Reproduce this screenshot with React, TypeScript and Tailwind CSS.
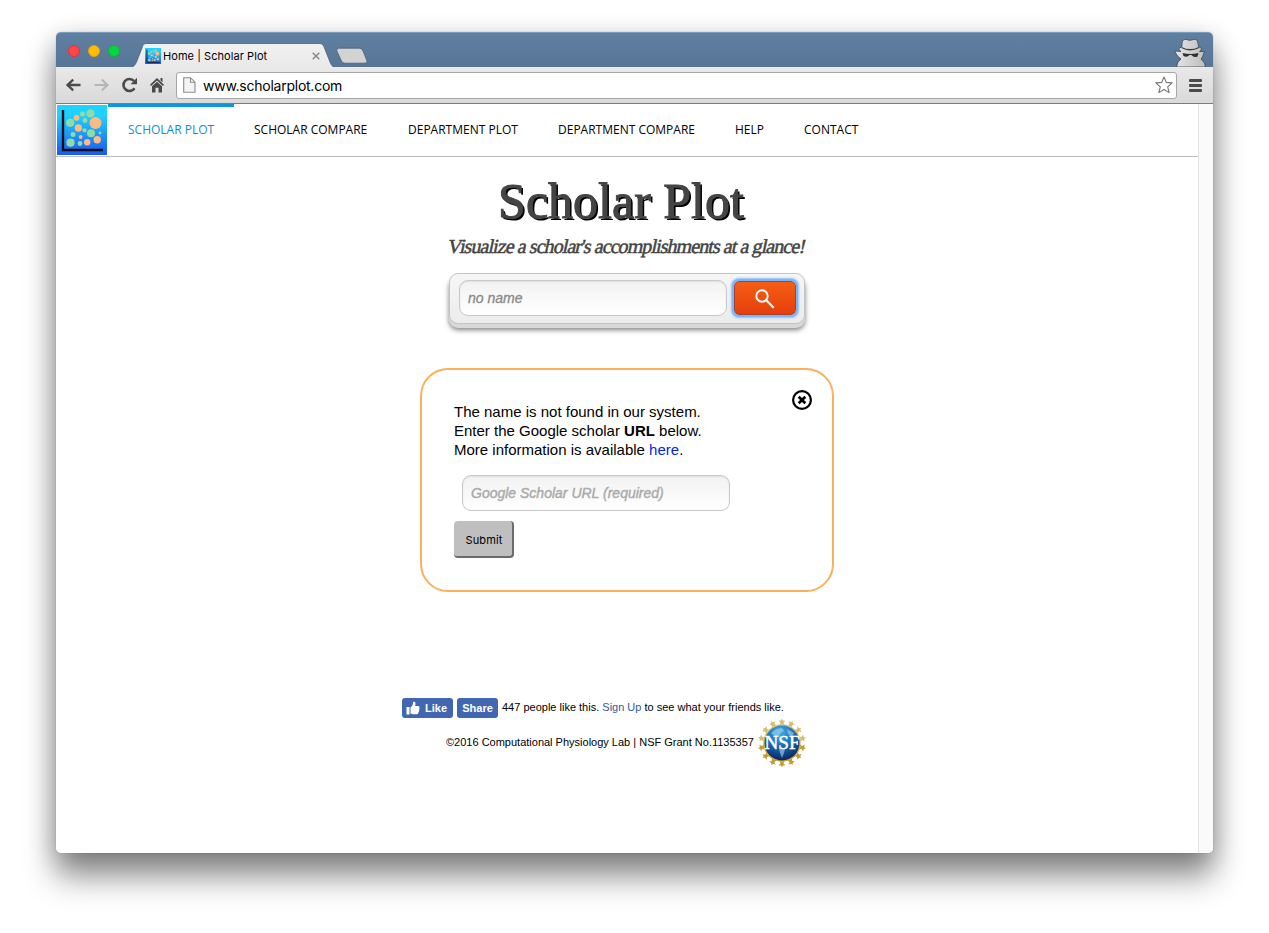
import React from "react";

const tabs = [
  { label: "SCHOLAR COMPARE", width: "w-[154px]" },
  { label: "DEPARTMENT PLOT", width: "w-[150px]" },
  { label: "DEPARTMENT COMPARE", width: "w-[177px]" },
  { label: "HELP", width: "w-[69px]" },
  { label: "CONTACT", width: "w-[94px]" },
];

const bubbles: [number, number, number, string][] = [
  [19.5, 12.8, 2.9, "#ffb983"], [25.5, 9, 2.5, "#90dba8"], [33.5, 8.5, 4, "#90dba8"],
  [28, 15.5, 2.4, "#90dba8"], [13.2, 17.8, 4.1, "#90dba8"], [38.5, 18, 6, "#ffb983"],
  [21.3, 23, 3.7, "#ffb983"], [16, 29.5, 2.5, "#90dba8"], [27.5, 25.3, 2.1, "#90dba8"],
  [34, 28.3, 4, "#90dba8"], [43, 28, 1.4, "#90dba8"], [23.7, 32, 1.9, "#ffb983"],
  [13.5, 37.7, 4.1, "#90dba8"], [23, 38.5, 2.4, "#90dba8"], [30.2, 37.3, 3.2, "#ffb983"],
  [40.2, 34.8, 3.7, "#ffb983"],
];

function PlotLogo({ className, id }: { className: string; id: string }) {
  return (
    <svg className={className} viewBox="0 0 50 50">
      <defs>
        <linearGradient id={id} x1="0" y1="0" x2="0" y2="1">
          <stop offset="0.2" stopColor="#1fd2ff" />
          <stop offset="1" stopColor="#1b58ee" />
        </linearGradient>
      </defs>
      <rect width="50" height="50" fill={`url(#${id})`} />
      {bubbles.map(([x, y, r, c], i) => (
        <circle key={i} cx={x} cy={y} r={r} fill={c} />
      ))}
      <path d="M6 5V45H46" fill="none" stroke="#0a0d1c" strokeWidth="2.4" />
    </svg>
  );
}

function NsfSeal() {
  const n = 14;
  return (
    <svg className="h-[50px] w-[50px] shrink-0" viewBox="-25 -25 50 50">
      <defs>
        <radialGradient id="globe" cx="0.45" cy="0.2" r="0.85">
          <stop offset="0" stopColor="#43aee0" />
          <stop offset="0.45" stopColor="#1a70ba" />
          <stop offset="1" stopColor="#071d55" />
        </radialGradient>
        <linearGradient id="gold" gradientUnits="userSpaceOnUse" x1="0" y1="-24" x2="0" y2="24">
          <stop offset="0" stopColor="#dfc57c" />
          <stop offset="1" stopColor="#c29a2c" />
        </linearGradient>
      </defs>
      <circle r="18.7" fill="url(#gold)" />
      {Array.from({ length: n }, (_, i) => {
        const a = (i * 2 * Math.PI) / n;
        const x = 21.4 * Math.sin(a);
        const y = -21.4 * Math.cos(a);
        return (
          <path
            key={i}
            transform={`translate(${x} ${y}) rotate(${(i * 360) / n})`}
            d="M0 -3.2L.9 -1.200L3.600 -.9L1.500 .8L2.400 3.600L0 2.500L-2.400 3.600L-1.500 .8L-3.600 -.9L-.9 -1.200Z"
            fill={y < 4 ? "#d9bd6c" : "#c39b2f"}
          />
        );
      })}
      <circle r="17.4" fill="url(#globe)" />
      <path d="M-11 -10L-6 -14L0 -15L2 -12L-2 -10L-3 -6L-7 -7ZM-3 5L3 6L2 10L0 15L-2 10ZM5 -14L12 -10L10 -6L6 -9Z" fill="#a5d6ee" opacity=".6" />
      <text y="6" textAnchor="middle" textLength="35" lengthAdjust="spacingAndGlyphs" fontFamily="Liberation Serif, serif" fontSize="19" fill="#fff" stroke="#fff" strokeWidth=".5">
        NSF
      </text>
    </svg>
  );
}

function Incognito() {
  return (
    <svg className="h-[29px] w-[34px]" viewBox="0 0 34 29">
      <defs>
        <linearGradient id="spy" x1="0" y1="0" x2="1" y2="0">
          <stop offset="0" stopColor="#e6e6e6" />
          <stop offset="1" stopColor="#bdbdbd" />
        </linearGradient>
      </defs>
      <path d="M9 8.500C9 4 9.500 2 11.500 1.500C14 1 15 2.300 17 2.300S20.500 .8 23 1.500C24.500 2 25 5 25.500 8.500L28.500 10.500Q29 12 26.500 13.500L31.500 13.500L29.500 19L28 21L31.500 25L32.500 29H3.500L5 24L8 21L4.500 18L1.500 13L8 13.500Q5 12 6 10.500Z" fill="url(#spy)" stroke="#3e4650" strokeWidth=".8" />
      <path d="M8.500 9.500Q17 14 26 9.500" fill="none" stroke="#3b3d40" strokeWidth="1.300" />
      <path d="M9.500 15Q17 17 25.500 15L24.500 18.500Q20.500 20 18.500 17H16.500Q14 20 10.500 18Z" fill="#2f3032" />
    </svg>
  );
}

function TitleBar() {
  return (
    <div className="flex h-[35px] rounded-t-[5px] border-t border-[#7a9bbb] bg-linear-to-b from-[#6080a2] to-[#567597]">
      <div className="flex gap-2 pt-3 pl-3">
        <i className="size-3 rounded-full border border-[#e0333a] bg-[#ff4645]" />
        <i className="size-3 rounded-full border border-[#e5a30a] bg-[#ffbd05]" />
        <i className="size-3 rounded-full border border-[#12b62f] bg-[#00d742]" />
      </div>
      <div className="relative ml-2.5 h-[34px] w-[206px]">
        <svg className="absolute inset-0 h-[34px] w-[206px]" viewBox="0 0 206 34">
          <defs>
            <linearGradient id="tab" x1="0" y1="0" x2="0" y2="1">
              <stop offset="0" stopColor="#f1f1f1" />
              <stop offset="1" stopColor="#e9e9e9" />
            </linearGradient>
          </defs>
          <path d="M0 34.500C4 34 5 32 6.500 29L12 15C13 11.500 14 10.500 17 10.500H189C192 10.500 193 11.500 194.500 15L200 29C201.500 32 202 34 206 34.500Z" fill="url(#tab)" stroke="#465f7b" strokeWidth=".8" />
        </svg>
        <div className="relative flex h-[34px] items-center pt-3 pl-[15px]">
          <PlotLogo id="fav" className="size-4 shrink-0" />
          <span className="ml-0.5 w-[149px] font-['Inter'] text-[11px] tracking-[0.06px] whitespace-nowrap text-black">Home | Scholar Plot</span>
          <svg className="size-[8px]" viewBox="0 0 8 8">
            <path d="M.7 .7L7.300 7.300M7.300 .7L.7 7.300" stroke="#858585" strokeWidth="1.400" />
          </svg>
        </div>
      </div>
      <svg className="mt-[14px] h-[18px] w-[32px]" viewBox="0 0 32 18">
        <path d="M2.500 1.200H23.500Q26 1.200 27 4L31 14Q31.500 16.200 28.500 16.200H9Q6.500 16.200 5.500 14L.8 4Q.3 1.200 2.500 1.200Z" fill="#d3d3d4" stroke="#465f7b" strokeWidth=".8" />
      </svg>
      <div className="ml-auto flex items-end pr-[6px]">
        <Incognito />
      </div>
    </div>
  );
}

function Toolbar() {
  return (
    <div className="flex h-[37px] items-center border-b border-[#7c7c7c] bg-linear-to-b from-[#e9e9e9] to-[#d9d9d9] pl-[9px]">
      <svg className="h-4 w-[17px]" viewBox="0 0 17 16">
        <path d="M15.500 8H2.500M8.200 2.600L2.500 8L8.200 13.400" fill="none" stroke="#4a4a4a" strokeWidth="2.300" />
      </svg>
      <svg className="ml-[11px] h-4 w-[17px]" viewBox="0 0 17 16">
        <path d="M1.500 8H14.500M8.800 2.600L14.500 8L8.800 13.400" fill="none" stroke="#b5b5b5" strokeWidth="2" />
      </svg>
      <svg className="ml-[11px] h-4 w-[17px]" viewBox="0 0 17 16">
        <path d="M13.500 11.200A6 6 0 1 1 13 4" fill="none" stroke="#4a4a4a" strokeWidth="2.600" />
        <path d="M16 .8V7.200H9.500Z" fill="#4a4a4a" />
      </svg>
      <svg className="ml-[11px] h-4 w-4" viewBox="0 0 16 16">
        <path d="M8 1L15 7.800L13.900 9L8 3.500L2.100 9L1 7.800ZM11.500 1H13.500V5.300L11.500 3.500ZM3 9.300L8 4.700L13 9.300V15.500H9.500V10.800H6.500V15.500H3Z" fill="#4a4a4a" />
      </svg>
      <div className="ml-[11px] flex h-[27px] w-[1001px] items-center rounded-[3px] border border-[#a6a6a6] bg-white pl-[6px]">
        <svg className="h-4 w-[13px]" viewBox="0 0 13 16">
          <path d="M.7 .7H7.500L12 5.200V15.300H.7Z M7.500 .7V5.200H12" fill="#f4f4f4" stroke="#8c8c8c" strokeWidth="1.100" />
        </svg>
        <span className="ml-[7px] font-['Inter'] text-[14px] tracking-[-0.25px] text-black">www.scholarplot.com</span>
        <svg className="mr-[3px] ml-auto h-[18px] w-[18px]" viewBox="0 0 18 18">
          <path d="M9 1L11.300 6.400L17.200 6.900L12.700 10.800L14.100 16.600L9 13.500L3.900 16.600L5.300 10.800L.8 6.900L6.700 6.400Z" fill="#fff" stroke="#757575" strokeWidth="1.100" strokeLinejoin="round" />
        </svg>
      </div>
      <div className="ml-3 flex w-[13px] flex-col gap-0.5">
        <i className="h-[3px] rounded-[1px] bg-[#4a4a4a]" />
        <i className="h-[3px] rounded-[1px] bg-[#4a4a4a]" />
        <i className="h-[3px] rounded-[1px] bg-[#4a4a4a]" />
      </div>
    </div>
  );
}

export default function App() {
  return (
    <div className="h-[933px] w-[1269px] overflow-hidden bg-white pt-8 pl-14 font-['Liberation_Sans',sans-serif]">
      <div className="h-[821px] w-[1157px] rounded-[5px] shadow-[0_0_1px_rgba(0,0,0,0.4),0_24px_32px_rgba(0,0,0,0.42),0_6px_26px_rgba(0,0,0,0.22)]">
        <TitleBar />
        <Toolbar />
        <div className="flex h-[749px] overflow-hidden rounded-b-[5px] bg-white">
          <main className="w-[1142px]">
            <nav className="flex h-[53px] border-b border-[#bdbdbd] pl-px font-['Open_Sans'] text-[12px] leading-[18px] whitespace-nowrap text-black">
              <PlotLogo id="logo" className="mt-px size-[50px] shrink-0" />
              <a className="ml-px w-[126px] border-t-3 border-[#0d97dc] pt-[14px] pl-5 text-[#0d8fd6]">SCHOLAR PLOT</a>
              {tabs.map((t) => (
                <a key={t.label} className={`${t.width} pt-[17px] pl-5`}>{t.label}</a>
              ))}
            </nav>

            <div className="flex flex-col items-center">
              <h1 className="mt-[15px] mr-[12px] h-[61px] font-['Liberation_Serif'] text-[50px] leading-[58px] whitespace-nowrap text-[#444] [-webkit-text-stroke:1px_#444] [text-shadow:2px_2px_0_#000]">Scholar Plot</h1>
              <p className="h-[27px] -skew-x-12 font-['Liberation_Serif'] text-[20px] leading-[26px] tracking-[-0.92px] whitespace-nowrap text-[#444] [-webkit-text-stroke:0.5px_#444]">Visualize a scholar's accomplishments at a glance!</p>

              <div className="mt-[13px] flex h-[51px] w-[356px] rounded-[9px] border border-[#c4c4c4] bg-linear-to-b from-[#f6f6f6] to-[#ececec] pt-[6px] pl-[9px] shadow-[0_4px_0_#d8d8d8,0_6px_5px_rgba(0,0,0,0.5)]">
                <div className="h-9 w-[268px] rounded-[9px] border border-[#c8c8c8] bg-linear-to-b from-[#f2f2f2] to-white pl-2 text-[14px] leading-[34px] text-[#888] italic shadow-[inset_0_1px_2px_rgba(0,0,0,0.08)] [-webkit-text-stroke:0.3px_#888]">no name</div>
                <div className="mt-px ml-[7px] flex h-[34px] w-[62px] items-center justify-center rounded-[5px] border border-[#a5432f] bg-linear-to-b from-[#f65e14] to-[#e63e0c] outline-2 outline-[#7ab5fa] shadow-[0_0_2px_3px_#8dc0fc]">
                  <svg className="mt-px size-5" viewBox="0 0 20 20">
                    <circle cx="7" cy="7" r="5.700" fill="none" stroke="#fff" strokeWidth="1.900" />
                    <path d="M11 11L18.700 18.700" stroke="#fff" strokeWidth="2.300" />
                  </svg>
                </div>
              </div>

              <section className="relative mt-[44px] h-[224px] w-[414px] rounded-[28px] border-2 border-[#fbb05c] pt-[32px] pl-8 text-black">
                <svg className="absolute top-5 right-5 size-5" viewBox="0 0 20 20">
                  <circle cx="10" cy="10" r="8.900" fill="none" stroke="#000" strokeWidth="2.200" />
                  <path d="M6.700 6.700L13.300 13.300M13.300 6.700L6.700 13.300" stroke="#000" strokeWidth="2.700" />
                </svg>
                <p className="h-[73px] text-[15px] leading-[19px] whitespace-nowrap">
                  The name is not found in our system.<br />
                  Enter the Google scholar <b>URL</b> below.<br />
                  More information is available <a className="text-[#0a1fe0]">here</a>.
                </p>
                <div className="ml-2 h-9 w-[268px] rounded-[9px] border border-[#c8c8c8] bg-linear-to-b from-[#f2f2f2] to-white pl-[8px] text-[14px] leading-[34px] text-[#aaa] italic shadow-[inset_0_1px_2px_rgba(0,0,0,0.08)] [-webkit-text-stroke:0.4px_#aaa]">Google Scholar URL (required)</div>
                <button className="mt-[10px] block h-[37px] w-[60px] rounded-[4px] border-r-2 border-b-2 border-[#6b6b6b] bg-[#bfbfbf] pt-[3px] pl-[2px] font-['Inter'] text-[11px] tracking-[0.1px]">Submit</button>
              </section>
            </div>

            <div className="mt-[106px] ml-[346px] flex h-5 items-center text-[11px] whitespace-nowrap text-black">
              <div className="flex h-5 w-[51px] items-center rounded-[3px] bg-[#4267b2] pl-1 font-bold text-white">
                <svg className="mr-[5px] size-[14px]" viewBox="0 0 14 14">
                  <path d="M.5 6H3.500V13.500H.5ZM4.500 6.500C6.500 5 7 3.500 7 1.500C7 .3 9.500 .2 9.500 2.500C9.500 3.800 9 5 9 5H12.500Q14 5.300 13.300 7Q14 8 13 9Q13.500 10.300 12.500 11Q12.700 13 11 13.300H7L4.500 12.500Z" fill="#fff" />
                </svg>
                Like
              </div>
              <div className="ml-1 flex h-5 w-[41px] items-center justify-center rounded-[3px] bg-[#4267b2] font-bold text-white">Share</div>
              <span className="ml-1 pb-0.5">447 people like this. <a className="text-[#365899]">Sign Up</a> to see what your friends like.</span>
            </div>
            <div className="ml-[390px] flex h-[50px] items-center text-[11px] whitespace-nowrap text-black">
              <span className="w-[311px] pb-0.5">©2016 Computational Physiology Lab | NSF Grant No.1135357</span>
              <NsfSeal />
            </div>
          </main>
          <aside className="w-[15px] border-l border-[#e4e4e4] bg-[#fafafa]" />
        </div>
      </div>
    </div>
  );
}
